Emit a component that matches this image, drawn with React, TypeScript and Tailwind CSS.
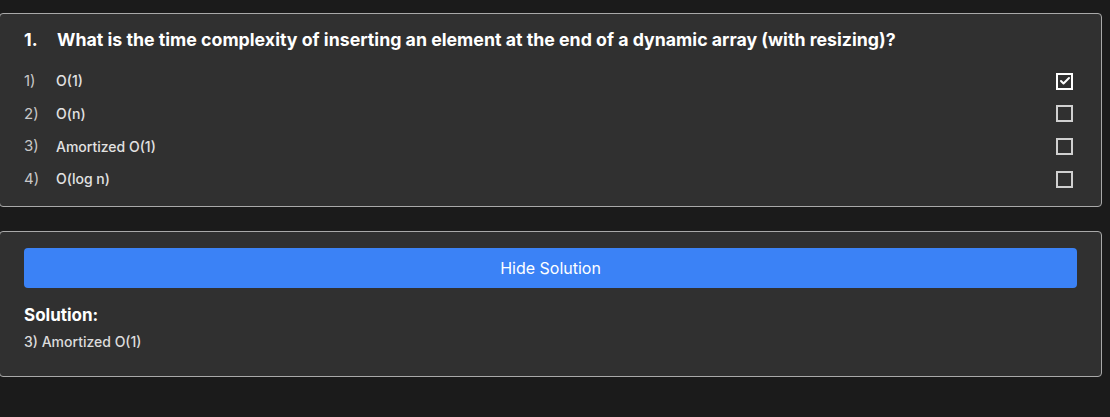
import { Check } from 'lucide-react'

const options = [
  { label: 'O(1)', checked: true },
  { label: 'O(n)', checked: false },
  { label: 'Amortized O(1)', checked: false },
  { label: 'O(log n)', checked: false },
]

export default function App() {
  return (
    <div className="min-h-[417px] bg-[#1b1b1b] pt-[13px] font-['Inter',sans-serif]">
      <div className="-ml-px w-[1103px] rounded-sm border border-[#a9a9a9] bg-[#303030] px-6 pt-[14px] pb-[10px]">
        <div className="flex h-6 items-center text-[17.75px] font-bold text-white">
          <span className="w-[33px]">1.</span>
          <span>What is the time complexity of inserting an element at the end of a dynamic array (with resizing)?</span>
        </div>
        <div className="mt-[13px]">
          {options.map((o, i) => (
            <div key={o.label} className="flex h-[32.67px] items-center">
              <span className="w-8 text-[15px] text-[#c8c8c8]">{i + 1})</span>
              <span className="flex-1 text-sm font-medium text-[#e2e2e2]">{o.label}</span>
              {o.checked ? (
                <span className="mr-1 flex size-[17px] items-center justify-center border-2 border-white">
                  <Check className="size-3 text-white" strokeWidth={4} />
                </span>
              ) : (
                <span className="mr-1 size-[17px] border-2 border-[#d0d0d0]" />
              )}
            </div>
          ))}
        </div>
      </div>

      <div className="-ml-px mt-6 w-[1103px] rounded-sm border border-[#a9a9a9] bg-[#303030] px-6 pt-4 pb-[24px]">
        <button className="flex h-10 w-full items-center justify-center rounded-sm bg-[#3b82f6] text-base text-white">
          Hide Solution
        </button>
        <h3 className="mt-[13px] text-[17px] leading-7 font-bold text-white">Solution:</h3>
        <p className="mt-[3px] text-sm leading-5 font-medium text-[#dcdcdc]">3) Amortized O(1)</p>
      </div>
    </div>
  )
}
